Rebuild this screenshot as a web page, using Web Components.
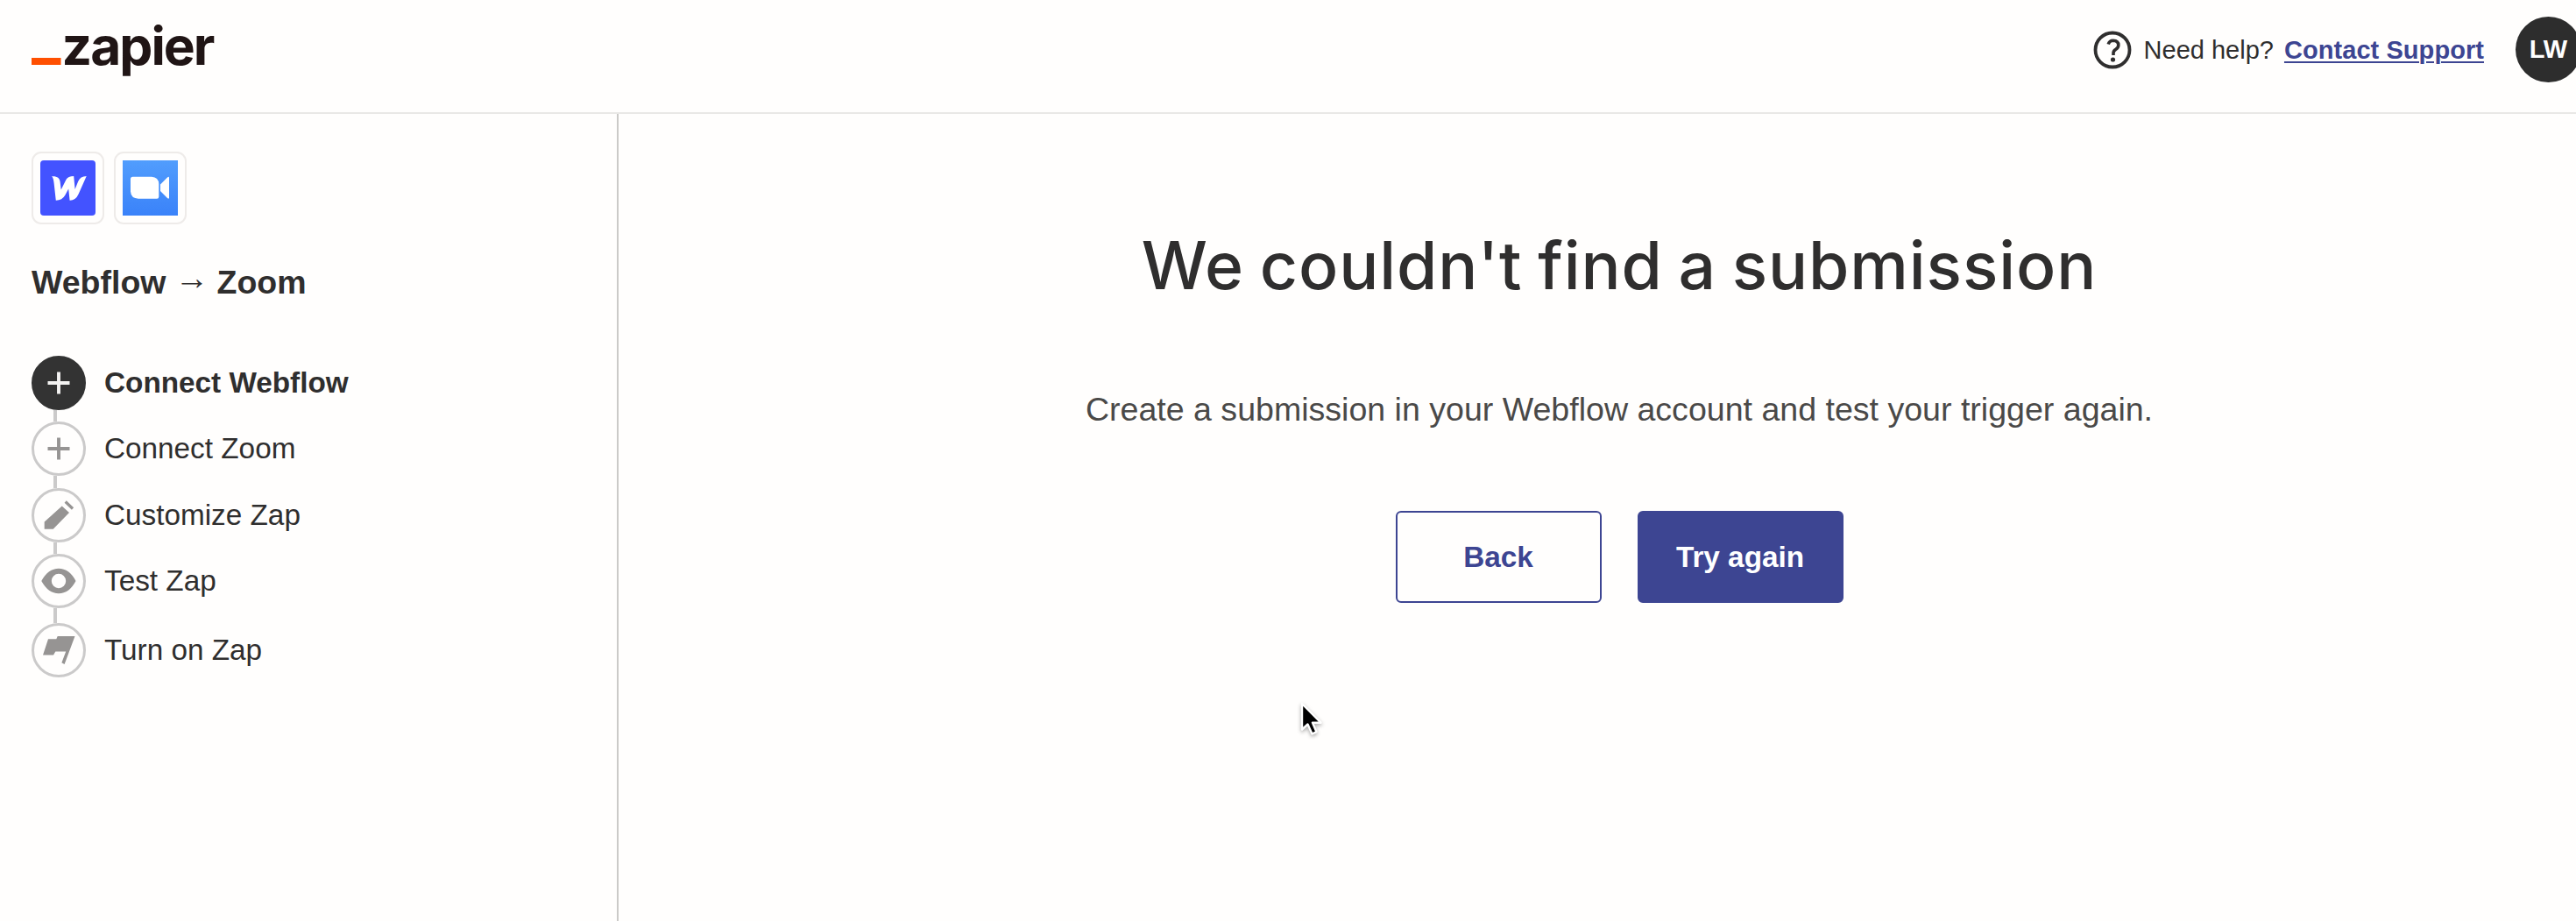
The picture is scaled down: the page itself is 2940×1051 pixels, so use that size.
<!DOCTYPE html>
<html lang="en">
<head>
<meta charset="utf-8">
<title>Webflow → Zoom | Zapier</title>
<style>
html, body {
  height: 100%;
  margin: 0;
  overflow: hidden;
}
body {
  background: #fffefd;
  color: #2f2e2e;
  font-family: "Liberation Sans", Arial, sans-serif;
}
</style>
</head>
<body>
<zap-page>
  <zap-header slot="header" initials="LW"></zap-header>
  <zap-sidebar slot="sidebar">
    <app-tile slot="apps" app="webflow"></app-tile>
    <app-tile slot="apps" app="zoom"></app-tile>
    <span slot="from">Webflow</span>
    <span slot="to">Zoom</span>
    <zap-step icon="plus" active>Connect Webflow</zap-step>
    <zap-step icon="plus">Connect Zoom</zap-step>
    <zap-step icon="pencil">Customize Zap</zap-step>
    <zap-step icon="eye" class="wide">Test Zap</zap-step>
    <zap-step icon="flag" last>Turn on Zap</zap-step>
  </zap-sidebar>
  <zap-message>
    <span slot="heading">We couldn't find a submission</span>
    <span slot="text">Create a submission in your Webflow account and test your trigger again.</span>
    <zap-button slot="actions">Back</zap-button>
    <zap-button slot="actions" primary>Try again</zap-button>
  </zap-message>
</zap-page>
<mouse-pointer></mouse-pointer>

<script>
const define = (name, html, setup) => {
  const template = document.createElement('template');
  template.innerHTML = html;
  customElements.define(name, class extends HTMLElement {
    constructor() {
      super();
      this.attachShadow({mode: 'open'});
      this.shadowRoot.appendChild(template.content.cloneNode(true));
    }
    connectedCallback() {
      if (setup) setup(this, this.shadowRoot);
    }
  });
};

const stepIcons = {
  plus: '<path d="M31 18.5v25M18.5 31h25" fill="none" stroke="currentColor" stroke-width="3.9"/>',
  pencil: `<path d="M14.7 38.5 34.7 20.5 43 28 24.7 46.8h-10z"/>
    <path d="m38.7 15.5 8.3 8" fill="none" stroke="currentColor" stroke-width="3.2"/>`,
  eye: '<path fill-rule="evenodd" d="M11.3 31Q19 16.8 31 16.8T50.5 31Q43 45.2 31 45.2T11.3 31zM31 22.8a8.2 8.2 0 1 0 0 16.4 8.2 8.2 0 0 0 0-16.4z"/>',
  flag: '<path d="M19 18.3h9.3L29.7 15H49.5L37.6 47l-3.2-1.8 4.8-12.7H27.3L25 36.4H13z"/>',
};

const appIcons = {
  webflow: `<rect width="63" height="63" rx="4" fill="#4353ff"/>
    <path fill="#fff" d="M13 18.3C19 17.8 22 20 22.6 24.5L23.7 33.5 29.6 21.8Q31.5 18 38.2 18L39.6 33 43.2 24Q45.6 18 52.7 18L43.6 38.5Q40.5 45.6 33.6 45.7L32.2 32.6 28.3 39.8Q25 45.7 17.8 45.7L15.6 26Q15 20 13 18.3z"/>`,
  zoom: `<defs><linearGradient id="sky" x2="0" y2="1"><stop stop-color="#519dfd"/><stop offset="1" stop-color="#3a82f9"/></linearGradient></defs>
    <rect width="63" height="63" fill="url(#sky)"/>
    <path fill="#fff" d="M11.5 18.7H33Q41 19 41.3 27v14.5q0 2.2-2.2 2.2H18Q9.5 43.5 9 35.5V21.2q0-2.5 2.5-2.5zM43 27.5l8-8q2-1.5 2 .5v22.5q0 2-2 .5l-8-8z"/>`,
};

define('zap-page', `
<style>
:host {
  display: grid;
  grid-template: 130px 1fr / 706px 1fr;
  height: 100vh;
  width: 2990px;
}
header {
  border-bottom: 2px solid #e9e8e6;
  grid-column: 1 / -1;
}
nav {
  border-right: 2px solid #cbcac8;
}
</style>
<header><slot name="header"></slot></header>
<nav><slot name="sidebar"></slot></nav>
<main><slot></slot></main>`);

define('zapier-logo', `
<style>
:host { display: block; }
svg {
  display: block;
  overflow: visible;
}
text {
  fill: #201515;
  font: 700 60.5px Inter, sans-serif;
}
</style>
<svg width="215" height="80" viewBox="0 0 215 80" role="img">
  <path d="M0 47h33.5v8H0z" fill="#ff4f00"/>
  <text x="34.5" y="55" textLength="175" lengthAdjust="spacing">zapier</text>
</svg>`);

define('zap-header', `
<style>
:host {
  align-items: flex-start;
  box-sizing: border-box;
  display: flex;
  font-size: 29px;
  height: 128px;
  justify-content: space-between;
  line-height: 34px;
  padding: 19px 44px 0 36px;
}
.help, .account {
  align-items: center;
  display: flex;
}
.help svg {
  margin-right: 14px;
}
a {
  color: #3d4592;
  font-weight: 700;
  letter-spacing: .06px;
  margin-left: 12px;
  text-decoration-thickness: 2px;
  text-underline-offset: 3px;
}
.avatar {
  background: #2d2d2d;
  border-radius: 50%;
  box-sizing: border-box;
  color: #fff;
  font-size: 29px;
  font-weight: 700;
  height: 75px;
  line-height: 75px;
  margin-left: 36px;
  text-align: center;
  width: 75px;
}
</style>
<zapier-logo></zapier-logo>
<div class="account">
  <div class="help">
    <svg width="44" height="44" viewBox="0 0 44 44">
      <circle cx="22" cy="22" r="19.5" fill="none" stroke="#2f2e2e" stroke-width="3.8"/>
      <path d="M17.2 15.5q1.2-4.3 5.6-4.3 6 .2 6 5.3 0 2.7-3 4.8-3 2-2.8 4.6v2" fill="none" stroke="#2f2e2e" stroke-width="3.6"/>
      <circle cx="22.5" cy="33" r="2.6" fill="#2f2e2e"/>
    </svg>
    <span>Need help?</span>
    <a href="#support">Contact Support</a>
  </div>
  <div class="avatar"></div>
</div>`, (host, root) => {
  root.querySelector('.avatar').textContent = host.getAttribute('initials');
});

define('zap-sidebar', `
<style>
:host {
  display: flex;
  flex-direction: column;
  padding: 43px 36px 0;
}
.apps {
  display: flex;
  gap: 11px;
}
h2 {
  align-items: center;
  display: flex;
  font-size: 37.5px;
  line-height: 44px;
  margin: 44px 0 0;
}
.arrow {
  font-size: 39px;
  line-height: 34px;
  margin: 0 9px 10px 10px;
}
.steps {
  display: flex;
  flex-direction: column;
  margin-top: 62px;
}
</style>
<div class="apps"><slot name="apps"></slot></div>
<h2><slot name="from"></slot><span class="arrow">→</span><slot name="to"></slot></h2>
<div class="steps"><slot></slot></div>`);

define('app-tile', `
<style>
:host {
  border: 2px solid #eeebe9;
  border-radius: 11px;
  box-sizing: border-box;
  display: block;
  height: 83px;
  padding: 8px;
  width: 83px;
}
svg { display: block; }
</style>
<svg width="63" height="63" viewBox="0 0 63 63"></svg>`, (host, root) => {
  root.querySelector('svg').innerHTML = appIcons[host.getAttribute('app')];
});

define('zap-step', `
<style>
:host {
  display: grid;
  font-size: 33.3px;
  grid-template-columns: 62px 1fr;
  column-gap: 21px;
  line-height: 62px;
}
.icon {
  border: 3px solid #cbcaca;
  border-radius: 50%;
  box-sizing: border-box;
  color: #969493;
  fill: currentColor;
  height: 62px;
  width: 62px;
}
.icon svg {
  display: block;
  margin: -3px;
}
.line {
  background: #cbcaca;
  height: 13.3px;
  margin-left: 25px;
  width: 4px;
}
:host(.wide) .line { height: 17.5px; }
:host([active]) { font-weight: 700; }
:host([active]) .icon {
  background: #333;
  border-color: #333;
  color: #f4f3f2;
}
:host([last]) .line { display: none; }
</style>
<div class="icon"><svg width="62" height="62" viewBox="0 0 62 62"></svg></div>
<div><slot></slot></div>
<div class="line"></div>`, (host, root) => {
  root.querySelector('svg').innerHTML = stepIcons[host.getAttribute('icon')];
});

define('zap-message', `
<style>
:host {
  align-items: center;
  display: flex;
  flex-direction: column;
  padding-top: 128px;
}
h1 {
  font: 500 75px/90px Inter, sans-serif;
  letter-spacing: .9px;
  margin: 0;
  word-spacing: -3.2px;
}
p {
  color: #4a4948;
  font-size: 37.55px;
  line-height: 44px;
  margin: 97px 0 0;
}
.actions {
  display: flex;
  gap: 41px;
  margin-top: 94px;
}
</style>
<h1><slot name="heading"></slot></h1>
<p><slot name="text"></slot></p>
<div class="actions"><slot name="actions"></slot></div>`);

define('zap-button', `
<style>
:host { display: block; }
button {
  background: #fffefd;
  border: 2px solid #3d4592;
  border-radius: 6px;
  color: #3d4592;
  cursor: pointer;
  display: block;
  font: inherit;
  font-size: 33.3px;
  font-weight: 700;
  height: 105px;
  padding: 0;
  width: 235px;
}
:host([primary]) button {
  background: #3d4592;
  color: #fff;
}
</style>
<button><slot></slot></button>`);

define('mouse-pointer', `
<style>
:host {
  filter: drop-shadow(0 2px 2px #0005);
  left: 1484px;
  pointer-events: none;
  position: absolute;
  top: 800px;
}
svg { display: block; }
</style>
<svg width="26" height="40" viewBox="0 0 26 40">
  <path d="M2 3v29.5l6.5-6 5 11 5-2.3-4.5-10.5h9.5z" stroke="#fff" stroke-width="2.4" stroke-linejoin="round"/>
</svg>`);
</script>
</body>
</html>
